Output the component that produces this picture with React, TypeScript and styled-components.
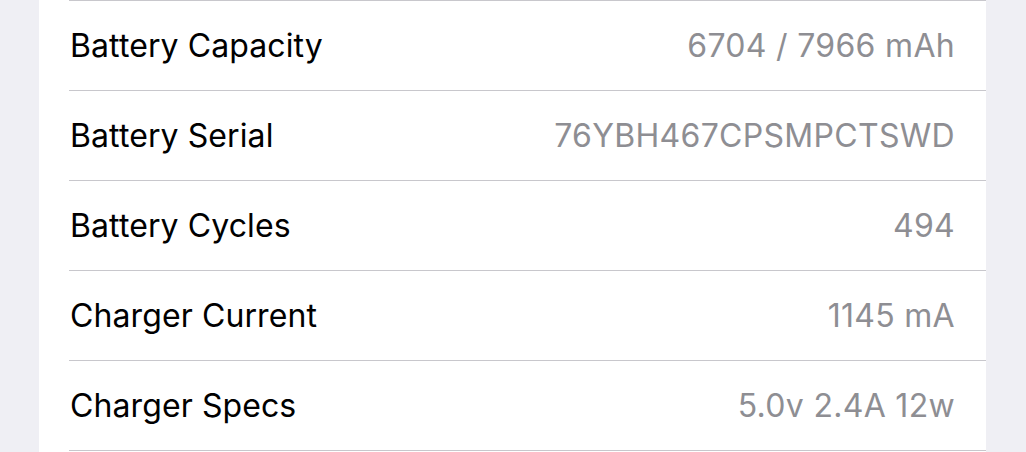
import React from "react"
import styled, { createGlobalStyle } from "styled-components"

const GlobalStyle = createGlobalStyle`
  html, body {
    margin: 0;
    padding: 0;
    background: #efeff4;
  }
  body {
    font-family: Inter, "Noto Sans", "Liberation Sans", sans-serif;
    -webkit-font-smoothing: antialiased;
  }
`

const Page = styled.div`
  height: 452px;
  overflow: hidden;
  padding: 0 40px 0 39px;
`

const Card = styled.div`
  background: #ffffff;
  height: 100%;
  padding-left: 30px;
`

const List = styled.ul`
  list-style: none;
  margin: 0;
  padding: 0;
  border-top: 1px solid #c8c7cc;
`

const Row = styled.li`
  display: flex;
  align-items: center;
  justify-content: space-between;
  height: 89px;
  padding: 0 31px 0 1px;
  border-bottom: 1px solid #c8c7cc;
  font-size: 32px;
`

const Label = styled.span`
  color: #000000;
  letter-spacing: 0.1px;
`

const Value = styled.span`
  color: #8e8e93;
  letter-spacing: 0.3px;
`

const rows: Array<[string, string]> = [
  ["Battery Capacity", "6704 / 7966 mAh"],
  ["Battery Serial", "76YBH467CPSMPCTSWD"],
  ["Battery Cycles", "494"],
  ["Charger Current", "1145 mA"],
  ["Charger Specs", "5.0v 2.4A 12w"],
]

export default function App() {
  return (
    <>
      <GlobalStyle />
      <Page>
        <Card>
          <List>
            {rows.map(([label, value]) => (
              <Row key={label}>
                <Label>{label}</Label>
                <Value>{value}</Value>
              </Row>
            ))}
          </List>
        </Card>
      </Page>
    </>
  )
}
